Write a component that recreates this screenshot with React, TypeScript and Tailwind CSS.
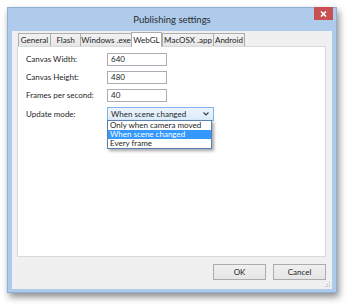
import React from "react";

const tabs = [
  { name: "General", w: "w-[32px]" },
  { name: "Flash", w: "w-[30px]" },
  { name: "Windows .exe", w: "w-[51px]" },
  { name: "WebGL", w: "w-[31px]", active: true },
  { name: "MacOSX .app", w: "w-[51px]" },
  { name: "Android", w: "w-[32px]" },
];

const fields = [
  { label: "Canvas Width:", value: "640" },
  { label: "Canvas Height:", value: "480" },
  { label: "Frames per second:", value: "40" },
];

const options = ["Only when camera moved", "When scene changed", "Every frame"];

export default function App() {
  return (
    <div
      className="w-[350px] h-[307px] bg-white overflow-hidden pt-[7px] pl-[7px] text-[8px] leading-[9px] text-[#1e1e1e]"
      style={{ fontFamily: 'Lato, "Noto Sans", sans-serif' }}
    >
      {/* window */}
      <div className="relative w-[330px] h-[286px] bg-[#aecbec] border border-[#8eaed4] shadow-[2px_4px_7px_rgba(0,0,0,0.45)] flex flex-col">
        {/* title bar */}
        <div className="h-[23px] flex items-center justify-center text-[9.5px] text-[#2b2b2b]">
          Publishing settings
        </div>
        <div className="absolute -top-px right-[3px] w-[19px] h-[13px] bg-[#c75050] flex items-center justify-center">
          <svg width="7" height="6" viewBox="0 0 7 6">
            <path d="M1 0.5 L6 5.5 M6 0.5 L1 5.5" stroke="#fff" strokeWidth="1.6" />
          </svg>
        </div>

        {/* client area */}
        <div className="ml-[4px] mr-[4px] h-[258px] bg-[#f0f0f0] flex flex-col relative">
          {/* tab strip */}
          <div className="h-[15px] flex items-end pl-[6px]">
            {tabs.map((t) =>
              t.active ? (
                <div
                  key={t.name}
                  className={`${t.w} h-[15px] -mb-px z-10 bg-white border border-b-0 border-[#acacac] flex items-center justify-center whitespace-nowrap`}
                >
                  {t.name}
                </div>
              ) : (
                <div
                  key={t.name}
                  className={`${t.w} h-[13px] bg-gradient-to-b from-[#f2f2f2] to-[#e6e6e6] border border-b-0 border-r-0 last:border-r border-[#acacac] flex items-center justify-center whitespace-nowrap`}
                >
                  {t.name}
                </div>
              )
            )}
          </div>

          {/* tab panel */}
          <div className="ml-[5px] mr-[6px] h-[211px] bg-white border border-[#d9d9d9] pt-[6px] pl-[8px]">
            <div className="flex flex-col gap-[5px]">
              {fields.map((f) => (
                <div key={f.label} className="flex items-center h-[13px]">
                  <div className="w-[81px]">{f.label}</div>
                  <div className="w-[60px] h-[13px] border border-[#abadb3] bg-white flex items-center pl-[3px]">
                    {f.value}
                  </div>
                </div>
              ))}
              <div className="flex items-center h-[14px]">
                <div className="w-[81px]">Update mode:</div>
                <div className="relative">
                  <div className="w-[107px] h-[14px] border border-[#7eb4ea] bg-gradient-to-b from-[#ecf4fc] to-[#dcecfc] flex items-center justify-between pl-[3px] pr-[4px]">
                    <span>When scene changed</span>
                    <svg width="6" height="4" viewBox="0 0 6 4">
                      <path d="M0.5 0.5 L3 3 L5.5 0.5" stroke="#3c3c3c" strokeWidth="1.2" fill="none" />
                    </svg>
                  </div>
                  <div className="absolute left-0 top-[13px] w-[105px] h-[29px] bg-white border border-[#5b7fb0] shadow-[2px_2px_3px_rgba(0,0,0,0.35)] flex flex-col">
                    {options.map((o, i) => (
                      <div
                        key={o}
                        className={`h-[9px] flex items-center pl-[2px] ${
                          i === 1 ? "bg-[#3399ff] text-white" : ""
                        }`}
                      >
                        {o}
                      </div>
                    ))}
                  </div>
                </div>
              </div>
            </div>
          </div>

          {/* buttons */}
          <div className="flex justify-end gap-[7px] mr-[6px] mt-[7px]">
            <div className="w-[53px] h-[16px] border border-[#acacac] bg-gradient-to-b from-[#f0f0f0] to-[#e5e5e5] flex items-center justify-center">
              OK
            </div>
            <div className="w-[53px] h-[16px] border border-[#acacac] bg-gradient-to-b from-[#f0f0f0] to-[#e5e5e5] flex items-center justify-center">
              Cancel
            </div>
          </div>

          {/* size grip */}
          <svg className="absolute right-[1px] bottom-[1px]" width="6" height="6" viewBox="0 0 6 6">
            <rect x="4" y="0" width="1" height="1" fill="#b8b8b8" />
            <rect x="2" y="2" width="1" height="1" fill="#b8b8b8" />
            <rect x="4" y="2" width="1" height="1" fill="#b8b8b8" />
            <rect x="0" y="4" width="1" height="1" fill="#b8b8b8" />
            <rect x="2" y="4" width="1" height="1" fill="#b8b8b8" />
            <rect x="4" y="4" width="1" height="1" fill="#b8b8b8" />
          </svg>
        </div>
      </div>
    </div>
  );
}
